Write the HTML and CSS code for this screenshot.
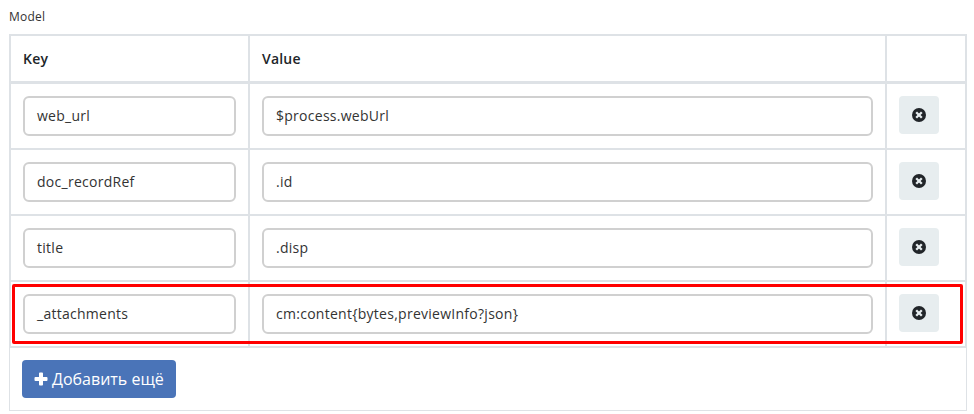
FILE: index.html
```html
<!DOCTYPE html>
<html lang="ru">
<head>
<meta charset="utf-8">
<title>Model</title>
<link rel="stylesheet" href="styles.css">
</head>
<body>
<svg width="0" height="0" class="sprite">
  <symbol id="remove" viewBox="0 0 14 14"><circle cx="7" cy="7" r="7"/><path d="M4.200 4.200l5.600 5.600M9.800 4.200L4.200 9.800" fill="none" stroke="#e7edef" stroke-width="2.300"/></symbol>
</svg>
<div class="label">Model</div>
<div class="grid">
  <div class="row head"><div class="cell">Key</div><div class="cell">Value</div><div class="cell"></div></div>
  <div class="row"><div class="cell"><div class="field">web_url</div></div><div class="cell"><div class="field">$process.webUrl</div></div><div class="cell"><button class="remove"><svg><use href="#remove"/></svg></button></div></div>
  <div class="row"><div class="cell"><div class="field">doc_recordRef</div></div><div class="cell"><div class="field">.id</div></div><div class="cell"><button class="remove"><svg><use href="#remove"/></svg></button></div></div>
  <div class="row"><div class="cell"><div class="field">title</div></div><div class="cell"><div class="field">.disp</div></div><div class="cell"><button class="remove"><svg><use href="#remove"/></svg></button></div></div>
  <div class="row marked"><div class="cell"><div class="field">_attachments</div></div><div class="cell"><div class="field">cm:content{bytes,previewInfo?json}</div></div><div class="cell"><button class="remove"><svg><use href="#remove"/></svg></button></div></div>
  <div class="foot"><button class="add"><svg viewBox="0 0 14 14"><path d="M5.900.5h2.200q.9 0 .9.900V5h3.600q.9 0 .9.900v2.200q0 .9-.9.900H9v3.600q0 .9-.9.900H5.900q-.9 0-.9-.9V9H1.400q-.9 0-.9-.9V5.900q0-.9.900-.9H5V1.400q0-.9.900-.9z"/></svg><span>Добавить ещё</span></button></div>
</div>
</body>
</html>
```
FILE: styles.css
```css
* { box-sizing: border-box; }
body {
  margin: 0;
  padding: 8px 7px 0 9px;
  background: #fff;
  color: #212529;
  font-family: "Open Sans", sans-serif;
}
.sprite { display: none; }
.label { height: 26px; font-size: 12px; line-height: 18px; letter-spacing: .25px; color: #333; }
.grid { width: 958px; }
.row {
  display: grid;
  grid-template-columns: 239px 637px 80px;
  height: 66px;
  border-left: 2px solid #dee2e6;
  border-bottom: 2px solid #dee2e6;
}
.cell { padding: 12px; border-right: 2px solid #dee2e6; }
.head {
  height: 50px;
  border-top: 2px solid #dee2e6;
  border-bottom-width: 3px;
  font-size: 14px;
  line-height: 21px;
  font-weight: 600;
  letter-spacing: .2px;
}
.field {
  height: 40px;
  padding: 0 12px;
  border: 2px solid #d0d0d0;
  border-radius: 6px;
  font-size: 14px;
  letter-spacing: .27px;
  line-height: 36px;
  color: #333;
}
button { display: flex; align-items: center; border: 0; font-family: inherit; }
.remove {
  justify-content: center;
  width: 40px;
  height: 38px;
  padding: 0;
  border-radius: 4px;
  background: #e7edef;
}
.remove svg { width: 14px; height: 14px; fill: #212529; }
.marked { position: relative; }
.marked::after {
  content: "";
  position: absolute;
  inset: 2px 4px 2px 1px;
  border: 3px solid #f00;
  border-radius: 2px;
}
.foot {
  height: 63px;
  padding: 12px;
  border: 1px solid #dee2e6;
  border-top: 0;
}
.add {
  gap: 4px;
  width: 154px;
  height: 38px;
  padding: 0 12px;
  border-radius: 4px;
  background: #4a74b8;
  color: #fff;
  font-size: 16px;
  line-height: 24px;
  white-space: nowrap;
}
.add svg { flex: none; width: 14px; height: 14px; fill: #fff; }
```
